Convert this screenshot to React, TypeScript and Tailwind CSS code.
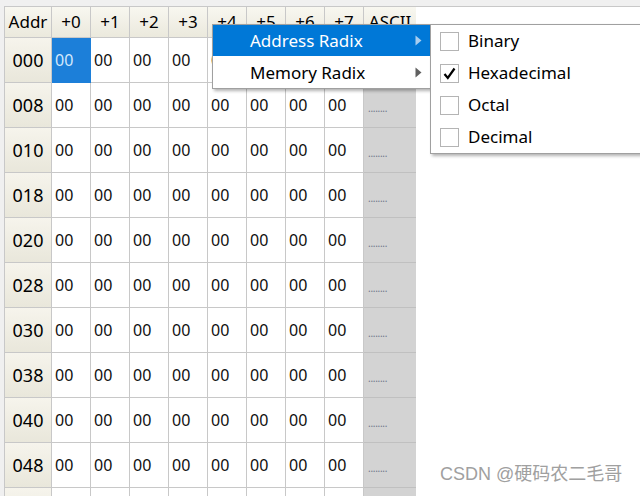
import React from "react";

const COLS = ["+0", "+1", "+2", "+3", "+4", "+5", "+6", "+7"];
const ROWS = ["000", "008", "010", "018", "020", "028", "030", "038", "040", "048", "050"];
const RADIX = [
  { label: "Binary", checked: false },
  { label: "Hexadecimal", checked: true },
  { label: "Octal", checked: false },
  { label: "Decimal", checked: false },
];

const font = { fontFamily: '"Noto Sans", "Open Sans", sans-serif' };

function Arrow({ color }: { color: string }) {
  return (
    <svg width="7" height="11" viewBox="0 0 7 11" aria-hidden="true">
      <path d="M0.5 0.5 6.5 5.5 0.5 10.5Z" fill={color} />
    </svg>
  );
}

function HeaderCell({ children, w }: { children: React.ReactNode; w: string }) {
  return (
    <div
      className={`${w} h-[31px] shrink-0 flex items-center justify-center border-r border-b border-[#c8c8c8] bg-gradient-to-b from-[#f8f7f0] to-[#ebe9dd] text-[17px] text-black`}
    >
      {children}
    </div>
  );
}

function Row({ addr, index }: { addr: string; index: number }) {
  return (
    <div className="flex">
      <div className="w-[47px] h-[45px] shrink-0 flex items-center justify-center border-r border-b border-[#c8c8c8] bg-gradient-to-b from-[#f6f4ec] to-[#e9e7db] text-[18px] text-black">
        {addr}
      </div>
      {COLS.map((c, i) => {
        const sel = index === 0 && i === 0;
        return (
          <div
            key={c}
            className={
              "w-[39px] h-[45px] shrink-0 flex items-center pl-[3px] border-r border-b text-[16px] " +
              (sel ? "bg-[#1c7fd9] border-[#1c7fd9] text-[#d2e8fc]" : "bg-white border-[#c8c8c8] text-[#101010]")
            }
          >
            00
          </div>
        );
      })}
      <div className="w-[52px] h-[45px] shrink-0 flex items-center pl-[4px] pt-[6px] border-b border-[#c0c0c0] bg-[#d3d3d3] text-[10px] tracking-[-0.3px] text-[#6e7689]">
        ........
      </div>
    </div>
  );
}

export default function App() {
  return (
    <div className="relative w-[640px] h-[496px] overflow-hidden bg-[#f0f0f0] pt-[6px] pl-[4px]" style={font}>
      <div className="h-full bg-white border-l border-t border-[#c8c8c8]">
        <div className="flex">
          <HeaderCell w="w-[47px]">Addr</HeaderCell>
          {COLS.map((c) => (
            <HeaderCell key={c} w="w-[39px]">
              {c}
            </HeaderCell>
          ))}
          <div className="w-[52px] h-[31px] shrink-0 flex items-center justify-center border-b border-[#c8c8c8] bg-gradient-to-b from-[#f8f7f0] to-[#ebe9dd] text-[17px] text-black">
            ASCII
          </div>
        </div>
        {ROWS.map((r, i) => (
          <Row key={r} addr={r} index={i} />
        ))}
      </div>

      {/* context menu */}
      <div className="absolute left-[212px] top-[24px] w-[219px] bg-white border border-[#a0a0a0] shadow-[2px_2px_3px_rgba(0,0,0,0.3)]">
        <div className="h-[31px] flex items-center justify-between pl-[37px] pr-[8px] bg-[#0078d7] text-white text-[17px]">
          <span>Address Radix</span>
          <Arrow color="#a8cdef" />
        </div>
        <div className="h-[32px] flex items-center justify-between pl-[37px] pr-[8px] pt-px text-black text-[17px]">
          <span>Memory Radix</span>
          <Arrow color="#606060" />
        </div>
      </div>

      {/* submenu */}
      <div className="absolute left-[430px] top-[24px] w-[220px] bg-white border border-[#a0a0a0] shadow-[2px_2px_3px_rgba(0,0,0,0.3)]">
        {RADIX.map((r) => (
          <div key={r.label} className="h-[32px] flex items-center pl-[9px] gap-[9px] text-[17px] text-black">
            <div className="w-[19px] h-[19px] border border-[#b4b4b4] bg-white flex items-center justify-center">
              {r.checked && (
                <svg width="13" height="13" viewBox="0 0 13 13" aria-hidden="true">
                  <path d="M1.5 7 4.8 11 11.5 1.5" stroke="#000" strokeWidth="2.2" fill="none" strokeLinejoin="miter" />
                </svg>
              )}
            </div>
            <span>{r.label}</span>
          </div>
        ))}
      </div>

      <div
        className="absolute left-[440px] top-[462px] text-[18px] leading-[24px] text-[#a0a0a0]"
        style={{ fontFamily: '"Liberation Sans", "Noto Sans CJK SC", sans-serif' }}
      >
        CSDN @硬码农二毛哥
      </div>
    </div>
  );
}
